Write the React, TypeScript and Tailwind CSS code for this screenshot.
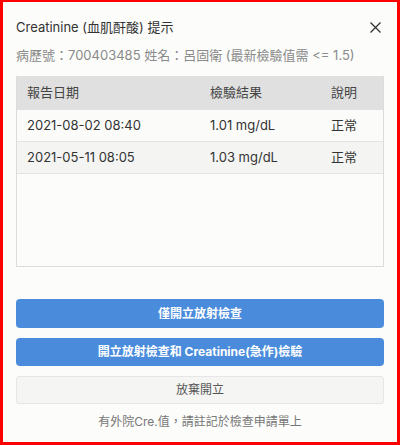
import React from "react";

const rows = [
  { date: "2021-08-02 08:40", value: "1.01 mg/dL", note: "正常", bg: "bg-[#fbfcfa]" },
  { date: "2021-05-11 08:05", value: "1.03 mg/dL", note: "正常", bg: "bg-[#f4f5f3]" },
];

export default function App() {
  return (
    <div
      className="w-[400px] h-[445px] border-[3px] border-t-2 border-[#ff0000] bg-[#fcfdfb] text-[#333] text-[13px] flex flex-col"
      style={{ fontFamily: 'Inter, "Noto Sans CJK TC", sans-serif' }}
    >
      {/* Header */}
      <div className="flex items-center justify-between pl-[13px] pr-[15px] pt-[13px] h-[38px]">
        <span>Creatinine (血肌酐酸) 提示</span>
        <svg width="13" height="13" viewBox="0 0 13 13" className="text-[#333]">
          <path d="M1.5 1.5 L11.5 11.5 M11.5 1.5 L1.5 11.5" stroke="currentColor" strokeWidth="1.3" />
        </svg>
      </div>
      <div className="pl-[13px] text-[#8a8a8a] mt-[6px] h-[20px]">
        病歷號：700403485 姓名：呂固衛 (最新檢驗值需 &lt;= 1.5)
      </div>

      {/* Table */}
      <div className="mx-[13px] mt-[10px] h-[191px] border border-[#dcdcdc] border-t-0">
        <div className="flex items-center h-[34px] bg-[#dfe0df] text-[#444]">
          <div className="w-[193px] pl-[10px]">報告日期</div>
          <div className="w-[121px]">檢驗結果</div>
          <div>說明</div>
        </div>
        {rows.map((r) => (
          <div key={r.date} className={`flex items-center h-[32px] border-b border-[#e3e3e3] ${r.bg}`}>
            <div className="w-[193px] pl-[10px]">{r.date}</div>
            <div className="w-[121px]">{r.value}</div>
            <div>{r.note}</div>
          </div>
        ))}
      </div>

      {/* Buttons */}
      <div className="mx-[13px] mt-[32px] flex flex-col gap-[10px]">
        <button className="h-[29px] rounded-[4px] bg-[#4a8cdb] text-white text-[12px] font-bold">
          僅開立放射檢查
        </button>
        <button className="h-[28px] rounded-[4px] bg-[#4a8cdb] text-white text-[12px] font-bold">
          開立放射檢查和 Creatinine(急作)檢驗
        </button>
        <button className="h-[28px] rounded-[3px] bg-[#f5f6f4] border border-[#e6e6e6] text-[#555] text-[12px]">
          放棄開立
        </button>
      </div>
      <div className="text-center text-[12px] text-[#777] mt-[9px]">有外院Cre.值，請註記於檢查申請單上</div>
    </div>
  );
}
